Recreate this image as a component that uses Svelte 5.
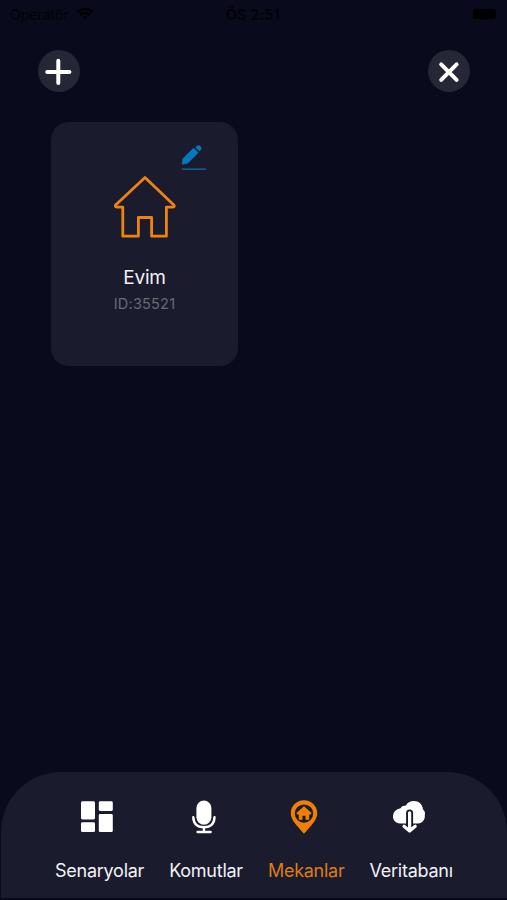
<script>
	let activeTab = 'places';

	const places = [{ id: 35521, name: 'Evim' }];

	const tabs = [
		{ key: 'scenarios', label: 'Senaryolar' },
		{ key: 'commands', label: 'Komutlar' },
		{ key: 'places', label: 'Mekanlar' },
		{ key: 'database', label: 'Veritabanı' }
	];
</script>

<div class="screen">
	<div class="status">
		<div class="carrier">
			<span>Operatör</span>
			<svg width="18" height="14" viewBox="0 0 18 14">
				<path d="M1.5 5 Q9 -1.5 16.5 5 M4.2 8 Q9 4 13.8 8" fill="none" stroke="#000" stroke-width="2.4" />
				<path d="M6.3 10 Q9 8 11.7 10 L9 13 Z" fill="#000" />
			</svg>
		</div>
		<span class="time">ÖS 2:51</span>
		<div class="battery"></div>
	</div>

	<header>
		<button class="round" aria-label="Ekle">
			<svg width="42" height="42" viewBox="0 0 42 42">
				<path d="M20.3 10.8 V33 M9.2 21.9 H31.4" />
			</svg>
		</button>
		<button class="round" aria-label="Kapat">
			<svg width="42" height="42" viewBox="0 0 42 42">
				<path d="M13.2 14.4 L28.6 29.8 M28.6 14.4 L13.2 29.8" />
			</svg>
		</button>
	</header>

	<main>
		{#each places as place}
			<section class="card">
				<svg class="edit" width="26" height="28" viewBox="0 0 26 28">
					<path d="M1.8 20.6 L2.3 16 L12.6 5.8 L16.4 9.6 L6.4 19.8 Z" stroke-width="1.6" stroke-linejoin="round" />
					<path d="M14.4 4.2 L15.6 2.9 Q17.6 1.4 19.6 3.2 Q21.4 5.2 19.8 7 L18.4 8.3 Z" />
					<rect x="0.8" y="25.4" width="24.4" height="1.5" opacity=".8" />
				</svg>
				<svg class="house" width="64" height="64" viewBox="0 0 64 64">
					<path d="M32 2.4 L2.4 30.2 Q2 32.2 4 32.2 H9.8 V61.2 H25.4 V42.5 H38.6 V61.2 H53.4 V32.2 H59.6 Q61.7 32 61.1 30.2 Z" />
				</svg>
				<h2>{place.name}</h2>
				<p>ID:{place.id}</p>
			</section>
		{/each}
	</main>

	<nav>
		{#each tabs as tab}
			<button class="tab" class:active={activeTab === tab.key} on:click={() => (activeTab = tab.key)}>
				<svg width="36" height="36" viewBox="0 0 36 36">
					{#if tab.key === 'scenarios'}
						<rect x="2" y="2.3" width="14" height="18.2" rx="1.4" />
						<rect x="19.8" y="2.3" width="14" height="9.6" rx="1.4" />
						<rect x="2" y="23.3" width="14" height="9.8" rx="1.4" />
						<rect x="19.8" y="15" width="14" height="18.1" rx="1.4" />
					{:else if tab.key === 'commands'}
						<rect x="10.4" y="1.6" width="15" height="24.2" rx="7.5" />
						<path class="line" d="M7.3 18.2 Q7.6 28.2 17.9 28.2 Q28.2 28.2 28.5 18.2 M17.9 28.2 V33 M11.6 33 H24.6" />
					{:else if tab.key === 'places'}
						<path fill-rule="evenodd" d="M18 1.3 C25.4 1.3 31.2 7 31.2 14.2 C31.2 21 25.5 26 18 34.8 C10.5 26 4.8 21 4.8 14.2 C4.8 7 10.6 1.3 18 1.3 Z M18 5.4 A9.2 9.2 0 1 0 18 23.8 A9.2 9.2 0 1 0 18 5.4 Z" />
						<path d="M18 7.2 L25.6 14 L24.8 15.4 H23.2 V20.8 H19.5 V16.8 H16.5 V20.8 H12.8 V15.4 H11.2 L10.4 14 Z" />
					{:else}
						<path d="M9 24.4 C4.8 24.2 2 21.4 2 17.5 C2 12.8 5.3 10 9.5 9.2 C11 7.2 13 6.6 15 6.6 C16.3 3.5 19.3 2 22.7 2 C28 2 31.5 5.4 32 10.4 C34 12 34.3 14 33.8 16 C34.3 20.5 31.7 24.2 27 24.4 Z" />
						<path class="gap" d="M18.6 24.6 V14" />
						<path class="line arrow" d="M18.6 13.8 V31 M13 27.3 L18.6 32 L24.2 27.3" />
					{/if}
				</svg>
				<span>{tab.label}</span>
			</button>
		{/each}
	</nav>
</div>

<style>
	:global(body) {
		margin: 0;
		background: #090a1c;
	}

	.screen {
		display: flex;
		flex-direction: column;
		box-sizing: border-box;
		width: 507px;
		height: 900px;
		padding-bottom: 2px;
		overflow: hidden;
		background: #090a1c;
		font-family: Inter, "Liberation Sans", sans-serif;
	}

	button {
		padding: 0;
		border: 0;
		background: none;
		font: inherit;
		color: inherit;
	}

	.status {
		display: grid;
		grid-template-columns: 1fr auto 1fr;
		align-items: center;
		height: 28px;
		padding: 0 11px 0 10px;
		font-size: 14px;
		color: #010108;
	}

	.carrier {
		display: flex;
		align-items: center;
		gap: 7px;
	}

	.time {
		font-weight: 600;
		letter-spacing: 0.4px;
	}

	.battery {
		justify-self: end;
		width: 23px;
		height: 10px;
		border-radius: 3px;
		background: #000;
	}

	header {
		display: flex;
		justify-content: space-between;
		padding: 22px 37px 1px 38px;
	}

	.round {
		display: flex;
		width: 42px;
		height: 42px;
		border-radius: 50%;
		background: #252737;
	}

	.round path {
		fill: none;
		stroke: #fff;
		stroke-width: 4;
		stroke-linecap: round;
	}

	main {
		flex: 1;
		padding: 29px 51px 0;
	}

	.card {
		display: flex;
		flex-direction: column;
		align-items: center;
		box-sizing: border-box;
		width: 187px;
		height: 244px;
		padding-top: 21px;
		border-radius: 18px;
		background: #1a1b2c;
	}

	.edit {
		align-self: flex-end;
		margin-right: 31px;
		fill: #0777bd;
		stroke: #0777bd;
		stroke-width: 0;
	}

	.house {
		margin-top: 4px;
	}

	.house path {
		fill: none;
		stroke: #ef8210;
		stroke-width: 2.8;
		stroke-linejoin: round;
	}

	h2 {
		margin: 27px 0 0;
		font-size: 19px;
		font-weight: 400;
		line-height: 24px;
		letter-spacing: -0.2px;
		color: #f1f1f6;
	}

	p {
		margin: 5px 0 0;
		font-size: 14.5px;
		line-height: 18px;
		letter-spacing: 0.2px;
		color: #686977;
	}

	nav {
		display: flex;
		align-items: flex-start;
		gap: 25px;
		height: 126px;
		margin-left: 1px;
		padding-left: 54px;
		box-sizing: border-box;
		border-radius: 60px 60px 0 0;
		background: #1a1b2c;
	}

	.tab {
		display: flex;
		flex-direction: column;
		align-items: center;
		padding-top: 27px;
		font-size: 18px;
		line-height: 24px;
		letter-spacing: -0.25px;
		color: #f3f3f8;
	}

	.tab svg {
		margin: 0 5px 24px 0;
		fill: #fff;
	}

	.tab .line {
		fill: none;
		stroke: #fff;
		stroke-width: 2.4;
		stroke-linecap: round;
		stroke-linejoin: round;
	}

	.tab .arrow {
		stroke-width: 3.2;
	}

	.tab .gap {
		fill: none;
		stroke: #1a1b2c;
		stroke-width: 7;
		stroke-linecap: round;
	}

	.tab.active {
		color: #df7d13;
	}

	.tab.active svg {
		fill: #f08005;
	}
</style>
